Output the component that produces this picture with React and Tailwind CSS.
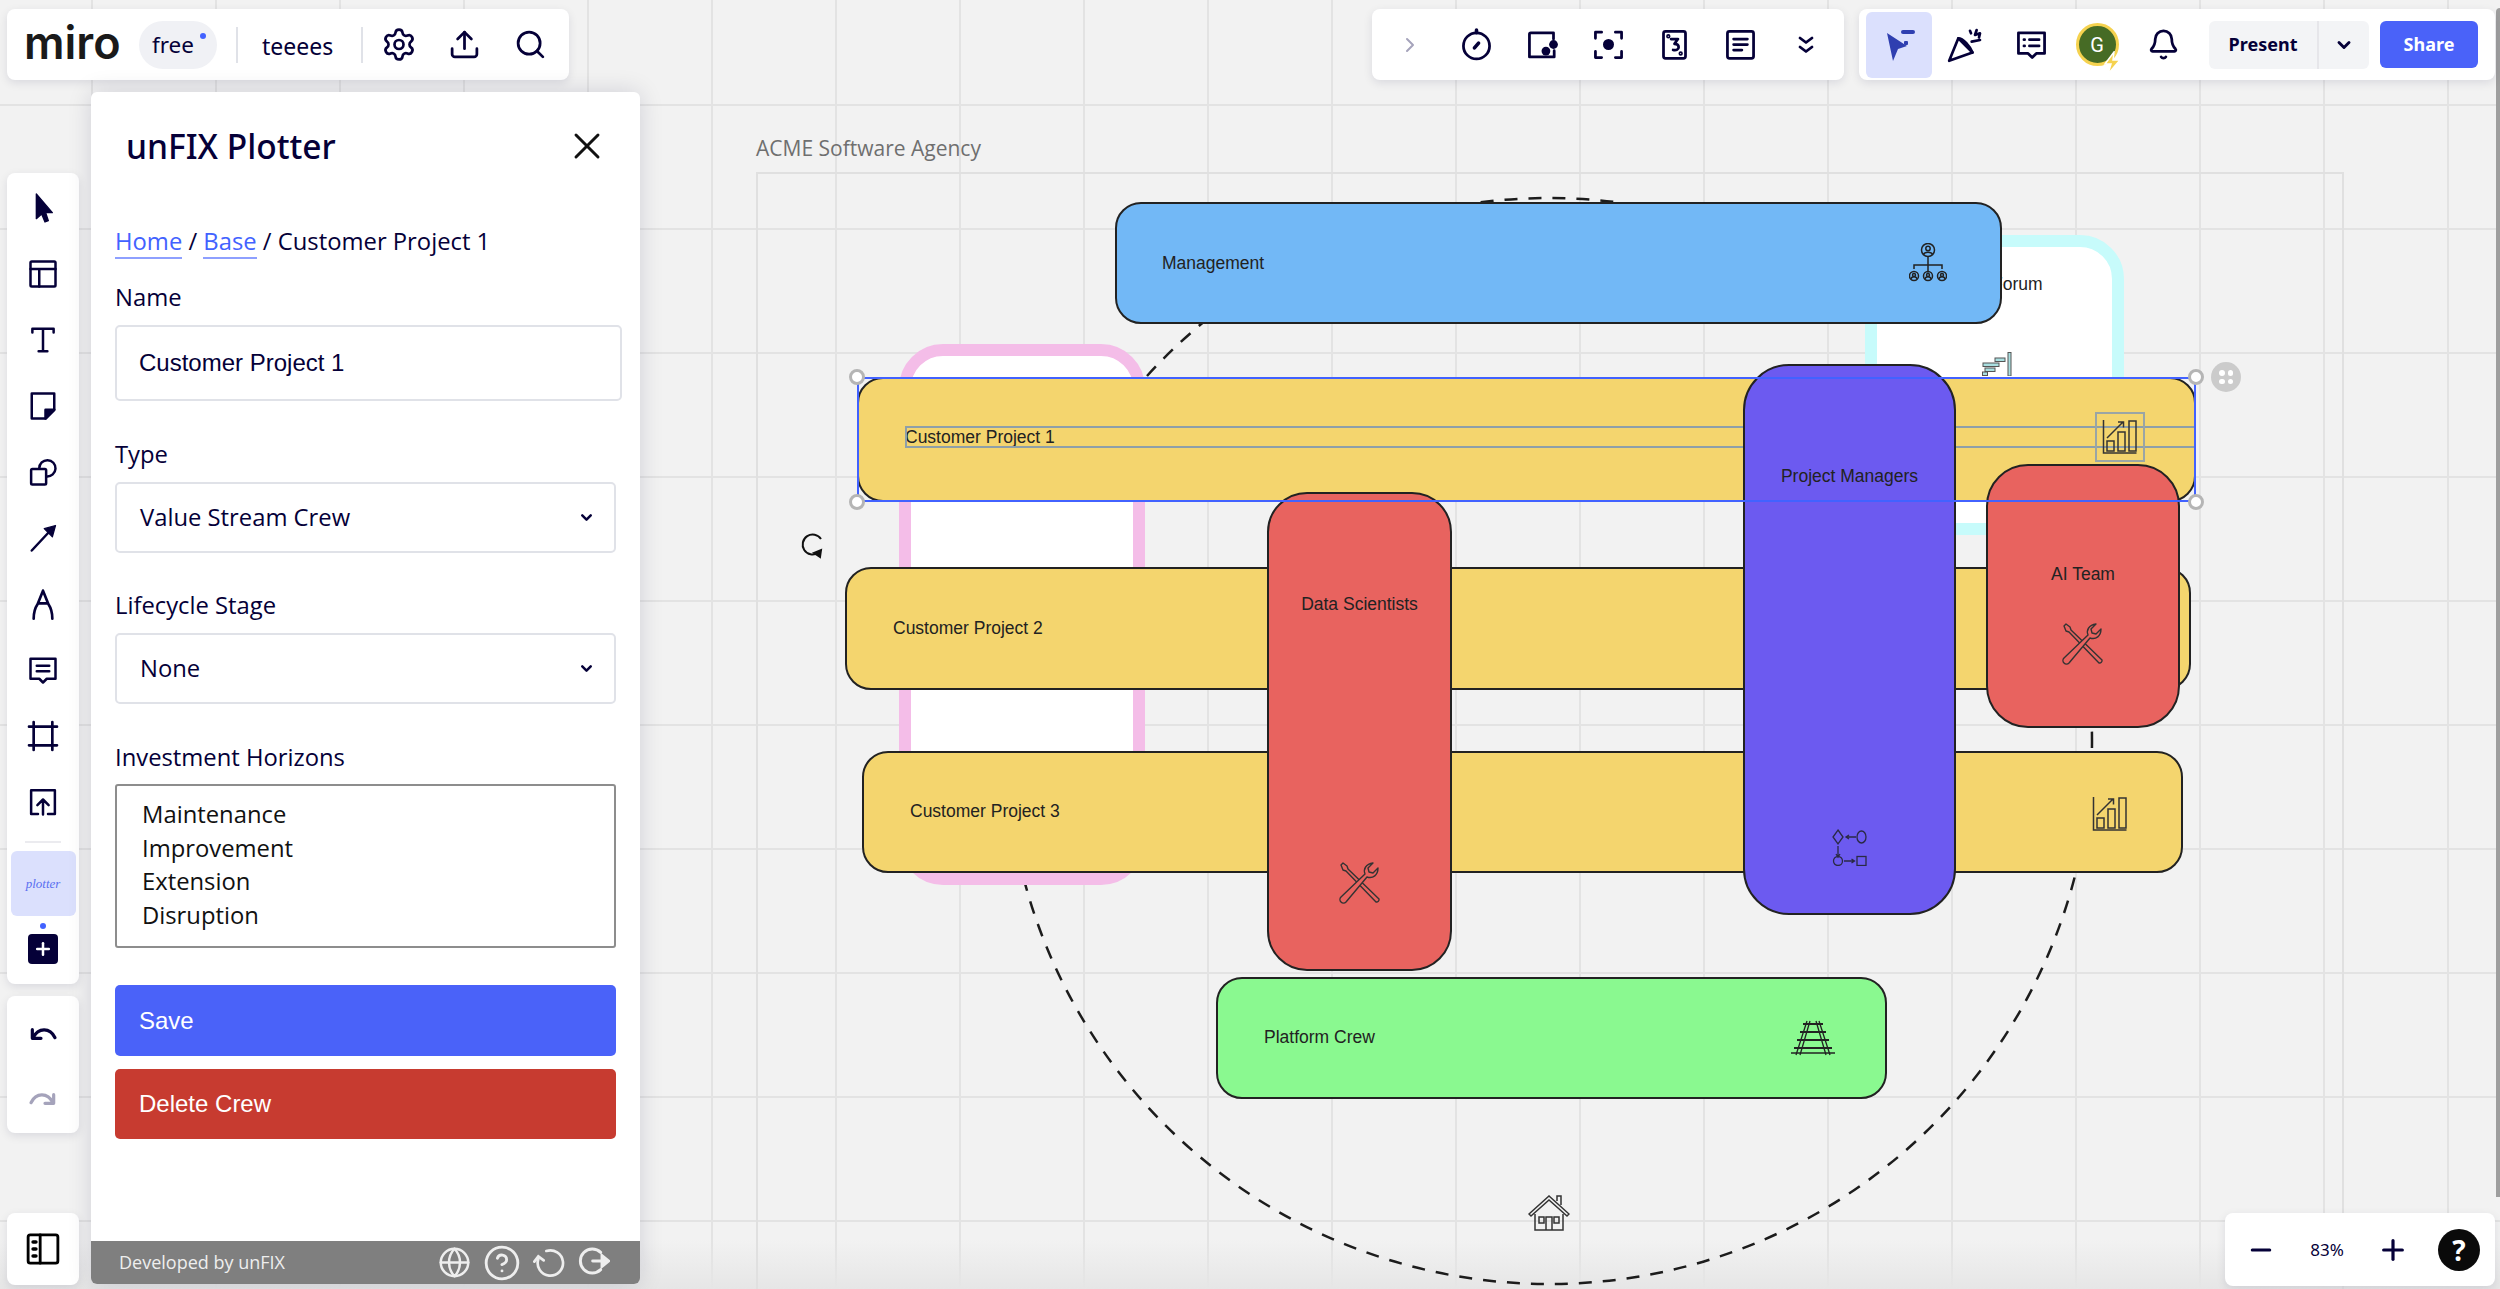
import { Search, Upload, Settings, X, ChevronDown, ChevronRight, Bell, Minus, Plus, Globe, CircleHelp } from "lucide-react";

const ink = "#050038";

const Icon = ({ size = 30, box = 24, sw = 2, color = ink, className = "", children }) => (
  <svg width={size} height={size} viewBox={`0 0 ${box} ${box}`} fill="none" stroke={color} strokeWidth={sw} strokeLinecap="round" strokeLinejoin="round" className={className}>
    {children}
  </svg>
);

// left toolbar icons
const leftTools = [
  <Icon key="cursor" size={32}><path d="M7 1.5 L19 15.5 L14 15.5 L16 21.5 L13.5 22.5 L11 16.5 L7 20 Z" fill={ink} strokeWidth="1" /></Icon>,
  <Icon key="layout"><rect x="2" y="2" width="20" height="20" rx="1" /><path d="M2 8h20M9 8v14" /></Icon>,
  <Icon key="text"><path d="M3.5 6V3h17v3M12 3v18M8.5 21h7" /></Icon>,
  <Icon key="sticky"><path d="M3 2h18v13l-7 7H3z" /><path d="M21 15h-7v7z" fill={ink} /></Icon>,
  <Icon key="shapes"><rect x="2.5" y="9.5" width="12" height="12.5" rx="1" /><path d="M9 9a6.5 6.5 0 1 1 6 6.5" /></Icon>,
  <Icon key="arrow"><path d="M3 22 L17 7" /><path d="M22 2 L13 4.5 L19.5 11 Z" fill={ink} strokeWidth="1" /></Icon>,
  <Icon key="pen" size={32}><path d="M12 2 L8 12 C6 15 5 18 5 23M12 2 L16 12 C18 15 19 18 19 23M8.5 11.5h7" /></Icon>,
  <Icon key="comment"><path d="M2 3h20v16h-7l-3 3-3-3H2z" /><path d="M7 8.5h10M7 13h10" /></Icon>,
  <Icon key="frame" size={32}><path d="M5 1.5v21M19 1.5v21M1.5 5h21M1.5 19h21" /></Icon>,
  <Icon key="upload"><path d="M8 21.5H2.5v-19h19v19H16M12 22V10M7.5 14.5 12 10l4.5 4.5" /></Icon>,
];

const topTools = [
  <Icon key="timer" size={33}><circle cx="12" cy="13" r="9.5" /><path d="M12 1.500v2M10.500 14.500l3-3.500" strokeWidth="2.600" /></Icon>,
  <Icon key="voting" size={33}><path d="M20 8V3.500H3.500A1 1 0 0 0 2.500 4.500V21h18v-4.500" /><circle cx="20" cy="12" r="3.200" fill={ink} stroke="none" /><circle cx="14.500" cy="16.800" r="3.200" fill={ink} stroke="none" /></Icon>,
  <Icon key="focus" size={33}><path d="M7 3H2.500v4.500M17 3h4.500v4.500M7 21.500H2.500V17M17 21.500h4.500V17" /><circle cx="12" cy="12" r="4" fill={ink} stroke="none" /></Icon>,
  <Icon key="cards" size={33}><rect x="4" y="2.500" width="16" height="19.500" rx="1.500" /><path d="M9.500 8h5l-2.500 3.500c2 0 3 1 3 2.500s-1.500 2.500-4 2" /><circle cx="7.500" cy="6" r=".6" /><circle cx="16.500" cy="18.500" r=".6" /></Icon>,
  <Icon key="notes" size={33}><rect x="2.500" y="2.500" width="19" height="19.500" rx="1.500" /><path d="M7 8h10M7 12h10M7 16h6" /></Icon>,
  <Icon key="more" size={24} sw={2.800}><path d="M6 5l6 4.500L18 5M6 14l6 4.500L18 14" /></Icon>,
];

const ChartIcon = () => (
  <svg width="36" height="36" viewBox="0 0 36 36" fill="none" stroke="#333" strokeWidth="1.500">
    <path d="M1.500 1v33h33" /><path d="M5 19 21 3M16 3h5.500v5.500" />
    <rect x="5" y="22" width="7" height="10" /><rect x="16" y="13" width="7" height="19" /><rect x="27" y="2" width="7" height="30" />
  </svg>
);

const ToolsIcon = () => (
  <svg width="42" height="42" viewBox="0 0 42 42" fill="none" stroke="#333" strokeWidth="1.400" strokeLinejoin="round">
    <path d="M2 3 4 1l4 3 1 3 31 30a2.500 2.500 0 0 1-3 3L7 9 4 8z" fill="#e8635f" />
    <path d="M2 35 26 12c-2-5 1-10 8-11l-5 5 1 4 4 1 5-5c0 7-5 11-11 9L7 40a3.500 3.500 0 0 1-5-5z" fill="#e8635f" />
  </svg>
);

const OrgIcon = () => (
  <svg width="38" height="40" viewBox="0 0 38 40" fill="none" stroke="#222" strokeWidth="1.500">
    <circle cx="19" cy="7" r="6.500" /><circle cx="19" cy="5.500" r="2.200" /><path d="M14.500 11.500c1-3 8-3 9 0" />
    <path d="M19 13.500v16M5 26v-4h28v4" />
    {[5, 19, 33].map((x) => (
      <g key={x}>
        <circle cx={x} cy="33" r="4.500" /><circle cx={x} cy="32" r="1.500" /><path d={`M${x - 3} 36c.5-3 5.500-3 6 0`} />
      </g>
    ))}
  </svg>
);

const FlowIcon = () => (
  <svg width="36" height="38" viewBox="0 0 36 38" fill="none" stroke="#2a2a44" strokeWidth="1.300">
    <path d="M6 2 11 9 6 16 1 9z" /><ellipse cx="29.500" cy="9" rx="4.500" ry="6" />
    <path d="M24 9H14M17 7l-3 2 3 2" /><path d="M6 18v11M4 26l2 3 2-3" />
    <ellipse cx="6" cy="33" rx="4.500" ry="4.500" /><rect x="25" y="28.500" width="9" height="9" /><path d="M12 33h10M19.500 31l3 2-3 2" />
  </svg>
);

const RailIcon = () => (
  <svg width="46" height="36" viewBox="0 0 46 36" fill="none" stroke="#222" strokeWidth="1.300">
    <path d="M17 1 6 35M20 1 10 35M26 1 36 35M29 1 40 35" />
    <path d="M13 4h20M10 12h26M7 20h32M4 28h38" strokeWidth="2" />
    <path d="M1 33h44" strokeWidth="1.600" />
  </svg>
);

const HouseIcon = () => (
  <svg width="42" height="36" viewBox="0 0 42 36" fill="none" stroke="#333" strokeWidth="1.500">
    <path d="M1 19 21 1l20 18-2 2L21 5 3 21z" /><path d="M7 19v16h28V19" /><path d="M29 6V1h4v9" />
    <rect x="11" y="22" width="5" height="6" /><rect x="26" y="22" width="5" height="6" /><path d="M18 35V22h6v13" />
  </svg>
);

const GanttIcon = () => (
  <svg width="30" height="24" viewBox="0 0 30 24" fill="#a9dfe0" stroke="#555" strokeWidth="1">
    <rect x="13" y="6" width="10" height="3.500" /><rect x="1" y="11" width="16" height="3.500" /><rect x="3" y="16" width="10" height="3.500" /><rect x="0.500" y="20" width="5" height="3.500" />
    <rect x="26" y="0.500" width="3" height="23.500" />
  </svg>
);

const Handle = ({ className }) => <div className={`absolute w-[16px] h-[16px] rounded-full bg-white border-[3px] border-[#b5b5b5] ${className}`} />;

const label = "text-[23.800px] leading-[34px] text-[#050038] font-['Open_Sans',sans-serif]";
const selectBox = "relative flex items-center h-[71px] w-[501px] pl-[23px] border-2 border-[#e0e2e8] rounded-[5px] text-[23.800px] text-[#050038] font-['Open_Sans',sans-serif]";
const canvasText = "absolute -translate-y-1/2 text-[17.500px] text-[#222]";
const crew = "absolute border-[2.500px] border-[#222]";

const SelectField = ({ value, className }) => (
  <div className={`${selectBox} ${className}`}>
    {value}
    <ChevronDown size={17} strokeWidth={3.500} className="absolute right-[19px]" />
  </div>
);

const App = () => {
  return (
    <div className="relative w-[2500px] h-[1289px] overflow-hidden bg-[#f2f2f2] bg-[linear-gradient(to_right,#e3e3e3_2px,transparent_2px),linear-gradient(to_bottom,#e3e3e3_2px,transparent_2px)] bg-[size:124px_124px] bg-[position:91px_104px] font-['Liberation_Sans',sans-serif]">
      <div className="absolute inset-x-0 bottom-0 h-[50px] bg-gradient-to-t from-[#e6e6e6] to-transparent" />

      {/* board */}
      <div className="absolute left-[756px] top-[149px] -translate-y-1/2 text-[21px] text-[#6f6f6f] font-['Open_Sans',sans-serif]">ACME Software Agency</div>
      <div className="absolute left-[756px] top-[172px] w-[1588px] h-[1200px] border-2 border-[#e0e0e0]" />

      <svg width="2500" height="1289" className="absolute left-0 top-0">
        <circle cx="1549" cy="741" r="543" fill="none" stroke="#1c1c1c" strokeWidth="2.500" strokeDasharray="13 11" strokeDashoffset="6" />
      </svg>

      <div className="absolute left-[899px] top-[344px] w-[246px] h-[541px] bg-white border-[12px] border-[#f4bde8] rounded-[44px]" />
      <div className="absolute left-[1865px] top-[235px] w-[259px] h-[300px] bg-white border-[12px] border-[#c7fbfb] rounded-[44px]" />
      <div className="absolute left-[2002px] top-[284px] -translate-x-[10px] -translate-y-1/2 text-[17.500px] text-[#222]">Forum</div>
      <div className="absolute left-[1982px] top-[352px]"><GanttIcon /></div>

      <div className={`${crew} left-[1115px] top-[202px] w-[887px] h-[122px] bg-[#72b8f6] rounded-[26px]`}>
        <span className={`${canvasText} top-[59px] left-[45px]`}>Management</span>
        <div className="absolute left-[792px] top-[39px]"><OrgIcon /></div>
      </div>

      <div className={`${crew} left-[857px] top-[377px] w-[1339px] h-[125px] bg-[#f4d56e] rounded-[26px]`}>
        <span className={`${canvasText} top-[58px] left-[46px]`}>Customer Project 1</span>
        <div className="absolute left-[46px] right-0 top-[47px] h-[22px] border-y-2 border-l-2 border-[#8e9fa8]" />
        <div className="absolute left-[1236px] top-[33px] w-[50px] h-[50px] border-2 border-[#9aa5a5] flex items-center justify-center"><ChartIcon /></div>
      </div>

      <div className={`${crew} left-[845px] top-[567px] w-[1346px] h-[123px] bg-[#f4d56e] rounded-[26px]`}>
        <span className={`${canvasText} top-[59px] left-[46px]`}>Customer Project 2</span>
      </div>

      <div className={`${crew} left-[862px] top-[751px] w-[1321px] h-[122px] bg-[#f4d56e] rounded-[26px]`}>
        <span className={`${canvasText} top-[58px] left-[46px]`}>Customer Project 3</span>
        <div className="absolute left-[1228px] top-[43px]"><ChartIcon /></div>
      </div>

      <div className={`${crew} left-[1267px] top-[492px] w-[185px] h-[479px] bg-[#e8635f] rounded-[40px] flex flex-col items-center`}>
        <span className="mt-[97px] text-[17.500px] text-[#222]">Data Scientists</span>
        <div className="mt-[245px]"><ToolsIcon /></div>
      </div>

      <div className={`${crew} left-[1743px] top-[364px] w-[213px] h-[551px] bg-[#6c5af0] rounded-[46px] flex flex-col items-center`}>
        <span className="mt-[97px] text-[17.500px] text-[#222]">Project Managers</span>
        <div className="mt-[339px]"><FlowIcon /></div>
      </div>

      <div className={`${crew} left-[1986px] top-[464px] w-[194px] h-[264px] bg-[#e8635f] rounded-[42px] flex flex-col items-center`}>
        <span className="mt-[95px] text-[17.500px] text-[#222]">AI Team</span>
        <div className="mt-[36px]"><ToolsIcon /></div>
      </div>

      <div className={`${crew} left-[1216px] top-[977px] w-[671px] h-[122px] bg-[#8af990] rounded-[26px]`}>
        <span className={`${canvasText} top-[58px] left-[46px]`}>Platform Crew</span>
        <div className="absolute left-[572px] top-[41px]"><RailIcon /></div>
      </div>

      <div className="absolute left-[1528px] top-[1195px]"><HouseIcon /></div>

      {/* selection */}
      <div className="absolute left-[857px] top-[377px] w-[1339px] h-[125px] border-2 border-[#4262ff]" />
      <Handle className="left-[849px] top-[369px]" />
      <Handle className="left-[849px] top-[494px]" />
      <Handle className="left-[2188px] top-[369px]" />
      <Handle className="left-[2188px] top-[494px]" />
      <div className="absolute left-[2211px] top-[362px] w-[30px] h-[30px] rounded-full bg-[#cbcbcb] grid grid-cols-2 gap-[3px] p-[8px]">
        <span className="bg-white rounded-full" /><span className="bg-white rounded-full" /><span className="bg-white rounded-full" /><span className="bg-white rounded-full" />
      </div>
      <svg width="26" height="28" viewBox="0 0 26 28" fill="none" stroke="#111" strokeWidth="2" className="absolute left-[800px] top-[531px]">
        <path d="M18 22A10 10 0 1 1 21 8" /><path d="M20 26l-6-4 7-3z" fill="#111" />
      </svg>

      <div className="absolute right-0 top-[8px] w-[4px] h-[1189px] bg-[#9e9e9e] rounded-tl-[4px]" />

      {/* top left bar */}
      <div className="absolute left-[7px] top-[9px] w-[562px] h-[71px] flex items-center bg-white rounded-[8px] shadow-[0_3px_10px_rgba(5,0,56,0.1)]">
        <div className="ml-[17px] w-[96px] -mt-[5px] text-[45px] leading-none font-semibold text-[#1a1a1a] font-['Inter',sans-serif]">miro</div>
        <div className="relative ml-[19px] w-[78px] h-[48px] flex items-center pl-[13px] rounded-[24px] bg-[#f0f1f5] text-[22.500px] text-[#050038] font-['Noto_Sans',sans-serif]">
          free
          <span className="absolute left-[61px] top-[12px] w-[6px] h-[6px] rounded-full bg-[#4262ff]" />
        </div>
        <div className="ml-[19px] w-[2px] h-[36px] bg-[#e0e2e8]" />
        <div className="ml-[24px] w-[74px] pt-[3px] text-[23px] text-[#050038] font-['Noto_Sans',sans-serif]">teeees</div>
        <div className="ml-[25px] w-[2px] h-[36px] bg-[#e0e2e8]" />
        <div className="ml-[18px] w-[36px] flex justify-center"><Settings size={37} strokeWidth={1.800} color={ink} /></div>
        <div className="ml-[29px] w-[36px] flex justify-center"><Upload size={33} strokeWidth={2} color={ink} /></div>
        <div className="ml-[30px] w-[36px] flex justify-center"><Search size={33} strokeWidth={2} color={ink} /></div>
      </div>

      {/* top right bars */}
      <div className="absolute left-[1372px] top-[9px] w-[472px] h-[71px] flex items-center pl-[5px] bg-white rounded-[8px] shadow-[0_3px_10px_rgba(5,0,56,0.1)]">
        <div className="w-[66px] flex justify-center"><ChevronRight size={24} strokeWidth={2} color="#a5a3bb" /></div>
        {topTools.map((tool, i) => (
          <div key={i} className="w-[66px] flex justify-center">{tool}</div>
        ))}
      </div>

      <div className="absolute left-[1859px] top-[9px] w-[636px] h-[71px] flex items-center pl-[7px] bg-white rounded-[8px] shadow-[0_3px_10px_rgba(5,0,56,0.1)]">
        <div className="w-[66px] h-[66px] flex items-center justify-center rounded-[6px] bg-[#dbe0fd]">
          <svg width="36" height="36" viewBox="0 0 36 36"><path d="M6 6l20 13-9 3-5 12z" fill="#2f3fb0" /><rect x="20" y="3" width="14" height="4" rx="2" fill="#2f3fb0" /><rect x="23" y="14" width="4" height="4" rx="1" fill="#2f3fb0" /></svg>
        </div>
        <div className="w-[66px] flex justify-center">
          <Icon size={40} sw={1.600}><path d="M2.500 21.500 8 8l8.500 8.500z" /><path d="M8 8c3 0 7 5 8.500 8.500" /><path d="M15 3.500l.6 1.500M19 3l-1 3 3-1-.6 2.500M16 10l5-1" /></Icon>
        </div>
        <div className="w-[66px] flex justify-center">
          <Icon size={33}><path d="M2.500 3.500h19v15h-6l-3 3-3-3h-7z" /><path d="M10.500 8.500h7M10.500 13h7M6.500 8.500h.5M6.500 13h.5" /></Icon>
        </div>
        <div className="w-[66px] flex justify-center">
          <div className="relative w-[43px] h-[43px] rounded-full bg-[#466b25] border-[3px] border-[#f5d24f] flex items-center justify-center text-white text-[20px] font-['Roboto',sans-serif]">
            G
            <svg width="20" height="24" viewBox="0 0 20 24" className="absolute left-[24px] top-[25px]"><path d="M11 1 2 13h6l-3 10 12-14h-7z" fill="#f5d24f" stroke="#fff" strokeWidth="1.500" /></svg>
          </div>
        </div>
        <div className="w-[66px] flex justify-center"><Bell size={33} strokeWidth={2} color={ink} /></div>
        <div className="ml-[13px] flex h-[48px] rounded-[6px] bg-[#f3f4f6]">
          <div className="w-[110px] flex items-center justify-center border-r-2 border-[#e6e6ea] text-[18px] font-bold text-[#050038] font-['Noto_Sans',sans-serif]">Present</div>
          <div className="w-[50px] flex items-center justify-center"><ChevronDown size={20} strokeWidth={3.500} color={ink} /></div>
        </div>
        <div className="ml-[11px] w-[98px] h-[47px] flex items-center justify-center rounded-[6px] bg-[#4a62f9] text-white text-[18px] font-bold font-['Noto_Sans',sans-serif]">Share</div>
      </div>

      {/* left toolbar */}
      <div className="absolute left-[7px] top-[173px] w-[72px] h-[811px] flex flex-col items-center pt-[2px] bg-white rounded-[8px] shadow-[0_3px_10px_rgba(5,0,56,0.1)]">
        {leftTools.map((tool, i) => (
          <div key={i} className="h-[66px] flex items-center justify-center">{tool}</div>
        ))}
        <div className="mt-[6px] w-[36px] h-[2px] bg-[#ebebef]" />
        <div className="mt-[8px] w-[65px] h-[65px] flex items-center justify-center rounded-[6px] bg-[#dbe0fd] text-[13px] italic text-[#5a6ff0] font-['Liberation_Serif',serif]">plotter</div>
        <div className="mt-[7px] w-[6px] h-[6px] rounded-full bg-[#4262ff]" />
        <div className="mt-[5px] w-[30px] h-[30px] flex items-center justify-center rounded-[4px] bg-[#050038]"><Plus size={20} strokeWidth={3} color="#fff" /></div>
      </div>

      <div className="absolute left-[7px] top-[996px] w-[72px] h-[137px] flex flex-col items-center bg-white rounded-[8px] shadow-[0_3px_10px_rgba(5,0,56,0.1)]">
        <Icon size={32} sw={2.400} className="mt-[21px]"><path d="M4 9.500v6.500h6.500" /><path d="M4.500 15.500C8.500 8 17 7.500 21 15.500" /></Icon>
        <Icon size={32} sw={2.400} color="#a5a3bb" className="mt-[33px]"><path d="M20 9.500v6.500h-6.500" /><path d="M19.500 15.500C15.500 8 7 7.500 3 15.500" /></Icon>
      </div>

      <div className="absolute left-[7px] top-[1213px] w-[72px] h-[72px] flex items-center justify-center bg-white rounded-[8px] shadow-[0_3px_10px_rgba(5,0,56,0.1)]">
        <Icon size={34} color="#000" sw={2}><rect x="1.500" y="2" width="21" height="20" rx="1.500" /><path d="M10 2v20" /><path d="M5 7h2M5 12h2M5 17h2" strokeWidth="2.500" /></Icon>
      </div>

      {/* plotter panel */}
      <div className="absolute left-[91px] top-[92px] w-[549px] h-[1192px] flex flex-col bg-white rounded-[6px] shadow-[0_0_24px_rgba(5,0,56,0.14)]">
        <div className="flex items-center justify-between h-[108px] pl-[35px] pr-[31px] text-[33.500px] text-[#050038] font-medium font-['Noto_Sans',sans-serif]">
          unFIX Plotter
          <X size={44} strokeWidth={1.600} color="#111" />
        </div>
        <div className="pl-[24px] pr-[18px] flex flex-col">
          <div className={`mt-[24px] ${label}`}>
            <span className="text-[#4262ff] border-b-2 border-[#8ea0ff]">Home</span> / <span className="text-[#4262ff] border-b-2 border-[#8ea0ff]">Base</span> / Customer Project 1
          </div>
          <div className={`mt-[22px] ${label}`}>Name</div>
          <input readOnly value="Customer Project 1" className="mt-[11px] w-[507px] h-[76px] pl-[22px] border-2 border-[#e0e2e8] rounded-[5px] text-[24px] text-[#050038] font-['Liberation_Sans',sans-serif]" />
          <div className={`mt-[36px] ${label}`}>Type</div>
          <SelectField value="Value Stream Crew" className="mt-[11px]" />
          <div className={`mt-[35px] ${label}`}>Lifecycle Stage</div>
          <SelectField value="None" className="mt-[11px]" />
          <div className={`mt-[36px] ${label}`}>Investment Horizons</div>
          <div className="mt-[10px] w-[501px] h-[164px] pl-[25px] pt-[12px] border-2 border-[#8d8d8d] rounded-[3px] text-[23.800px] leading-[33.600px] text-[#111] font-['Open_Sans',sans-serif]">
            <div>Maintenance</div>
            <div>Improvement</div>
            <div>Extension</div>
            <div>Disruption</div>
          </div>
          <div className="mt-[37px] w-[501px] h-[71px] flex items-center pl-[24px] rounded-[5px] bg-[#4a62f9] text-white text-[24px]">Save</div>
          <div className="mt-[13px] w-[501px] h-[70px] flex items-center pl-[24px] rounded-[5px] bg-[#c73b30] text-white text-[24px]">Delete Crew</div>
        </div>
        <div className="mt-auto h-[43px] flex items-center pl-[28px] pr-[30px] rounded-b-[6px] bg-[#7f7f7f] text-[#eeeeee] text-[18px] font-['Open_Sans',sans-serif]">
          <span className="mr-auto">Developed by unFIX</span>
          <Globe size={33} strokeWidth={1.800} color="#eee" />
          <CircleHelp size={38} strokeWidth={1.800} color="#eee" className="ml-[12px]" />
          <svg width="32" height="32" viewBox="0 0 24 24" fill="none" stroke="#eee" strokeWidth="2" strokeLinecap="round" className="ml-[12px]">
            <path d="M10 3a9.500 9.500 0 1 1-6 6" /><path d="M1 11l3-4 4 3" />
          </svg>
          <svg width="32" height="32" viewBox="0 0 24 24" fill="none" stroke="#eee" strokeWidth="2.200" strokeLinecap="round" className="ml-[13px] -mt-[4px]">
            <path d="M17 5.500A9 9 0 1 0 17 18.500" /><path d="M11 12h8" /><path d="M18 8l5 4-5 4z" fill="#eee" />
          </svg>
        </div>
      </div>

      {/* zoom bar */}
      <div className="absolute left-[2225px] top-[1213px] w-[270px] h-[73px] flex items-center bg-white rounded-[8px] shadow-[0_3px_10px_rgba(5,0,56,0.1)]">
        <div className="ml-[20px] w-[32px] flex justify-center"><Minus size={30} strokeWidth={2.400} color={ink} /></div>
        <div className="ml-[26px] w-[48px] text-center text-[17px] text-[#050038] font-['Noto_Sans',sans-serif]">83%</div>
        <div className="ml-[26px] w-[32px] flex justify-center"><Plus size={32} strokeWidth={2.400} color={ink} /></div>
        <div className="ml-[29px] w-[42px] h-[42px] flex items-center justify-center rounded-full bg-[#0a0a0a] text-white text-[28px] font-bold font-['Noto_Sans',sans-serif]">?</div>
      </div>
    </div>
  );
};

export default App;
